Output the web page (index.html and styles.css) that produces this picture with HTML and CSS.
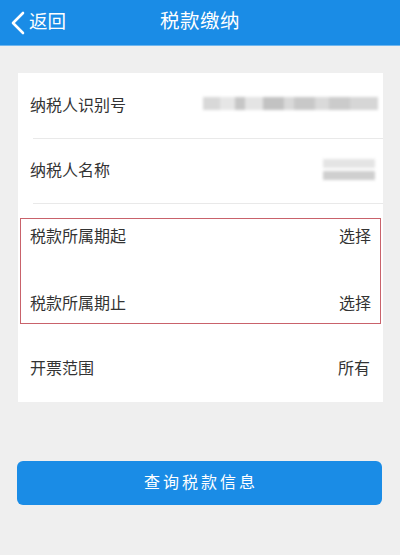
FILE: index.html
```html
<!DOCTYPE html>
<html lang="zh-CN">
<head>
<meta charset="utf-8">
<title>税款缴纳</title>
<link rel="stylesheet" href="styles.css">
</head>
<body>
<header class="topbar">
  <div class="back">
    <svg class="chev" width="16" height="24" viewBox="0 0 16 24"><path d="M13 2 L3 12 L13 22" fill="none" stroke="#fff" stroke-width="2.6" stroke-linecap="round" stroke-linejoin="round"/></svg>
    <span class="back-text">返回</span>
  </div>
  <div class="title">税款缴纳</div>
  <div></div>
</header>
<main class="page">
  <section class="card">
    <div class="row r1"><span class="label">纳税人识别号</span><span class="blur blur-id"></span></div>
    <div class="divider"></div>
    <div class="row r2"><span class="label">纳税人名称</span><span class="blur blur-name"><i></i><i></i></span></div>
    <div class="divider"></div>
    <div class="mark">
      <div class="row sel"><span class="label">税款所属期起</span><span class="value">选择</span></div>
      <div class="row sel"><span class="label">税款所属期止</span><span class="value">选择</span></div>
    </div>
    <div class="row r5"><span class="label">开票范围</span><span class="value">所有</span></div>
  </section>
  <button class="query">查询税款信息</button>
</main>
</body>
</html>
```

FILE: styles.css
```css
* { box-sizing: border-box; }
html, body { margin: 0; padding: 0; }
body {
  width: 400px;
  height: 555px;
  background: #efefef;
  font-family: "Noto Sans CJK SC", "Noto Sans", sans-serif;
  overflow: hidden;
}
.topbar {
  height: 46px;
  background: #1a8ce6;
  border-bottom: 1px solid #6fb6ee;
  display: grid;
  grid-template-columns: 1fr auto 1fr;
  align-items: center;
  color: #fff;
}
.back {
  display: flex;
  align-items: center;
  padding-left: 10px;
  font-size: 18.5px;
  gap: 3px;
}
.back-text { margin-bottom: 5px; }
.chev { display: block; }
.title { font-size: 19.5px; letter-spacing: 0.5px; margin-bottom: 6px; }
.page { padding: 27px 17px 0 18px; }
.card {
  background: #fff;
  display: flex;
  flex-direction: column;
}
.row {
  display: flex;
  align-items: center;
  justify-content: space-between;
  padding: 0 13px 4px 12px;
  font-size: 16px;
  color: #333;
}
.r1 { height: 65px; }
.r2 { height: 64px; }
.r5 { height: 66px; margin-top: 12px; }
.divider { height: 1px; background: #e9e9e9; margin-left: 15px; }
.mark {
  margin: 14px 2px 0 2px;
  border: 1.5px solid #c9626b;
  height: 106px;
  display: flex;
  flex-direction: column;
  justify-content: space-between;
}
.sel { height: 37px; padding: 0 9px 6px 9px; }
.value { color: #333; }
.blur { display: block; filter: blur(1.5px); }
.blur-id {
  width: 175px;
  height: 13px;
  margin-right: -8px;
  background: linear-gradient(90deg, #d8d8d8 0 10%, #e6e6e6 10% 18%, #c6c6c6 18% 24%, #e4e4e4 24% 34%, #c2c2c2 34% 46%, #d9d9d9 46% 52%, #c8c8c8 52% 64%, #dadada 64% 72%, #cbcbcb 72% 84%, #d6d6d6 84% 100%);
}
.blur-name {
  width: 52px;
  margin-right: -5px;
  display: flex;
  flex-direction: column;
  gap: 3px;
}
.blur-name i { display: block; height: 9px; background: #e4e4e4; }
.blur-name i:last-child { background: #cfcfcf; }
.query {
  display: block;
  width: 365px;
  height: 44px;
  margin-top: 59px;
  margin-left: -1px;
  border: none;
  border-radius: 6px;
  background: #1a8ce6;
  color: #fff;
  font-family: "Noto Sans CJK SC", "Noto Sans", sans-serif;
  font-size: 16px;
  letter-spacing: 3px;
  padding: 0 0 4px 3px;
}
```
